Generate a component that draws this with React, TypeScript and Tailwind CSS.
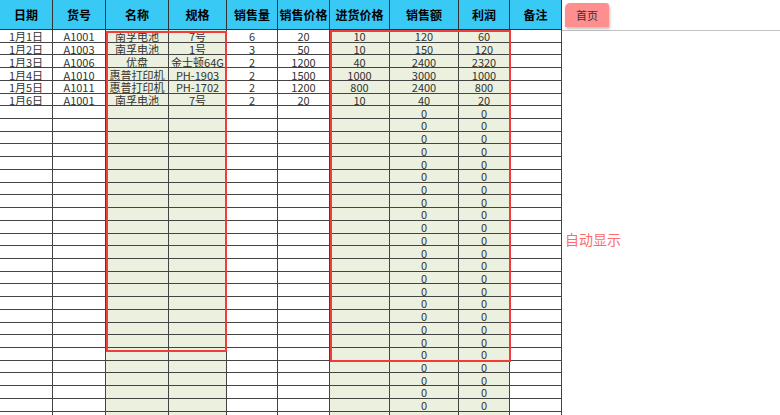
const cols = "grid grid-cols-[53px_53px_63px_58px_51px_52px_60px_69px_51px_52px]";

const headers = ["日期", "货号", "名称", "规格", "销售量", "销售价格", "进货价格", "销售额", "利润", "备注"];

const rows: string[][] = [
  ["1月1日", "A1001", "南孚电池", "7号", "6", "20", "10", "120", "60", ""],
  ["1月2日", "A1003", "南孚电池", "1号", "3", "50", "10", "150", "120", ""],
  ["1月3日", "A1006", "优盘", "金士顿64G", "2", "1200", "40", "2400", "2320", ""],
  ["1月4日", "A1010", "惠普打印机", "PH-1903", "2", "1500", "1000", "3000", "1000", ""],
  ["1月5日", "A1011", "惠普打印机", "PH-1702", "2", "1200", "800", "2400", "800", ""],
  ["1月6日", "A1001", "南孚电池", "7号", "2", "20", "10", "40", "20", ""],
];

// columns shaded green in the sheet
const green = [2, 3, 6, 7, 8];

const allRows: string[][] = [
  ...rows,
  ...Array.from({ length: 25 }, () => ["", "", "", "", "", "", "", "0", "0", ""]),
];

export default function App() {
  return (
    <div className="flex w-[780px] h-[415px] overflow-hidden bg-white font-['Noto_Sans_CJK_SC','Noto_Sans',sans-serif]">
      <div className="relative w-[562px] shrink-0">
        {/* header */}
        <div className={`${cols} h-[30px] bg-[#38c9f5] border-b border-[#333]`}>
          {headers.map((h) => (
            <div
              key={h}
              className="flex items-center justify-center border-r border-[#333] text-[12px] font-bold text-black"
            >
              {h}
            </div>
          ))}
        </div>

        {/* body */}
        {allRows.map((r, i) => (
          <div key={i} className={`${cols} grid-rows-[12.73px] h-[12.73px]`}>
            {r.map((c, j) => (
              <div
                key={j}
                className={`flex items-center justify-center min-h-0 pt-[1px] border-r border-b border-[#444] text-[11px] leading-[10px] text-[#333] whitespace-nowrap ${
                  green.includes(j) ? "bg-[#ebf1de]" : "bg-white"
                }`}
              >
                {c}
              </div>
            ))}
          </div>
        ))}

        {/* highlight boxes */}
        <div className="absolute left-[106px] top-[31px] w-[121px] h-[321px] border-2 border-[#f03c3c] pointer-events-none" />
        <div className="absolute left-[330px] top-[30px] w-[181px] h-[332px] border-2 border-[#f03c3c] pointer-events-none" />
      </div>

      <div className="flex-1 flex flex-col">
        <div className="h-[31px] border-b border-[#c4c4c4] flex items-start pl-[3px] pt-[3px]">
          <div className="w-[44px] h-[24px] rounded-tl-[5px] rounded-tr-[3px] bg-[#ff8e8e] shadow-[1px_2px_3px_rgba(0,0,0,0.25)] flex items-center justify-center text-[11px] text-[#333]">
            首页
          </div>
        </div>
        <div className="pl-[3px] pt-[198px] text-[14px] text-[#ff6b6b]">自动显示</div>
      </div>
    </div>
  );
}
